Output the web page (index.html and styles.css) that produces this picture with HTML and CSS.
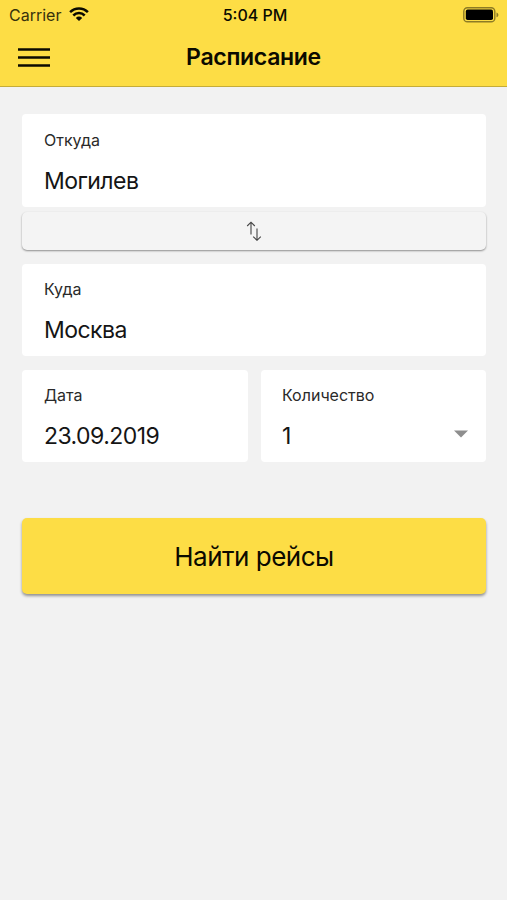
FILE: index.html
```html
<!DOCTYPE html>
<html lang="ru">
<head>
<meta charset="utf-8">
<title>Расписание</title>
<link rel="stylesheet" href="styles.css">
</head>
<body>
<header class="header">
  <div class="status">
    <div class="status-left">
      <span class="carrier">Carrier</span>
      <svg class="wifi" width="20" height="14" viewBox="0 0 20 14" fill="none" stroke="#0b0a00" stroke-width="2.5">
        <path d="M1.1 5.2C6 .2 14 .2 18.9 5.2M4.3 8.5C7.5 5.3 12.5 5.3 15.7 8.5"/>
        <path d="M6.8 10.9C8.6 9.1 11.4 9.1 13.2 10.9L10 14Z" fill="#0b0a00" stroke="none"/>
      </svg>
    </div>
    <span class="time">5:04 PM</span>
    <svg class="battery" width="36" height="16" viewBox="0 0 36 16">
      <rect x=".8" y=".8" width="31" height="14" rx="3.6" fill="none" stroke="#8d7b25" stroke-width="1.4"/>
      <rect x="2.8" y="2.6" width="27.2" height="10.4" rx="1.8" fill="#000"/>
      <path d="M33.5 5.4C36 6.2 36 9.4 33.5 10.2Z" fill="#8d7b25"/>
    </svg>
  </div>
  <div class="nav">
    <svg class="menu" width="32" height="20" viewBox="0 0 32 20" stroke="#0b0a00" stroke-width="2.5">
      <path d="M0 1.5H32M0 9.5H32M0 17.5H32"/>
    </svg>
    <h1 class="title">Расписание</h1>
  </div>
</header>
<main class="form">
  <div class="card origin">
    <span class="label">Откуда</span>
    <span class="value">Могилев</span>
  </div>
  <button class="swap" aria-label="Поменять местами">
    <svg width="16" height="20" viewBox="0 0 16 20" fill="none" stroke="#444" stroke-width="1.1">
      <path d="M5 13.5V1.3M1.2 5L5 1.2L8.8 5M11 7.5V19.2M7.2 15.6L11 19.3L14.8 15.6"/>
    </svg>
  </button>
  <div class="card">
    <span class="label">Куда</span>
    <span class="value">Москва</span>
  </div>
  <div class="row">
    <div class="card">
      <span class="label">Дата</span>
      <span class="value">23.09.2019</span>
    </div>
    <div class="card select">
      <div class="field">
        <span class="label">Количество</span>
        <span class="value">1</span>
      </div>
      <svg class="caret" width="14" height="8" viewBox="0 0 14 8"><path d="M0 .5H14L7 7.5Z" fill="#8e8e8e"/></svg>
    </div>
  </div>
  <button class="submit">Найти рейсы</button>
</main>
</body>
</html>
```
FILE: styles.css
```css
* { box-sizing: border-box; }
body {
  margin: 0;
  min-height: 900px;
  background: #f2f2f2;
  color: #151515;
  font-family: Inter, "Liberation Sans", sans-serif;
}
.header {
  height: 87px;
  background: #fddd45;
  border-bottom: 1px solid #c5ac39;
  color: #0b0a00;
}
.status {
  display: grid;
  grid-template-columns: 1fr auto 1fr;
  align-items: center;
  height: 30px;
  padding: 0 8px 0 9px;
}
.status-left { display: flex; align-items: center; gap: 8px; }
.wifi { margin-top: -2px; }
.carrier { font-size: 16px; line-height: 30px; color: #38320c; }
.time { margin-left: 2px; font-size: 16px; font-weight: 500; line-height: 30px; }
.battery { justify-self: end; }
.nav {
  display: grid;
  grid-template-columns: 1fr auto 1fr;
  align-items: center;
  height: 56px;
  padding: 0 18px;
}
.title {
  margin: 0;
  padding-bottom: 2px;
  font-size: 23px;
  font-weight: 600;
  line-height: 54px;
  letter-spacing: -.3px;
}
.form { display: flex; flex-direction: column; padding: 27px 21px 0 22px; }
.card {
  display: flex;
  flex-direction: column;
  height: 92px;
  padding: 14px 22px 0;
  background: #fff;
  border-radius: 4px;
}
.origin { height: 93px; padding-top: 15px; }
.label { font-size: 16px; line-height: 22px; color: #2a2a2a; }
.value { margin-top: 15px; font-size: 23px; line-height: 30px; letter-spacing: -.55px; }
.swap, .submit { border: 0; font-family: inherit; padding: 0; }
.swap {
  display: flex;
  align-items: center;
  justify-content: center;
  height: 38px;
  margin: 5px 0 14px;
  border-radius: 5px;
  background: #f4f4f4;
  box-shadow: 0 1px 2px rgba(0, 0, 0, .42);
}
.row { display: grid; grid-template-columns: 226px 1fr; gap: 13px; margin-top: 14px; }
.select { flex-direction: row; justify-content: space-between; padding: 14px 18px 0 21px; }
.field { display: flex; flex-direction: column; }
.caret { margin-top: 46px; }
.submit {
  height: 76px;
  margin-top: 56px;
  border-radius: 5px;
  background: #fddd45;
  box-shadow: 0 2px 3px rgba(0, 0, 0, .4);
  color: #0b0a00;
  font-size: 26px;
  letter-spacing: -.5px;
}
```
